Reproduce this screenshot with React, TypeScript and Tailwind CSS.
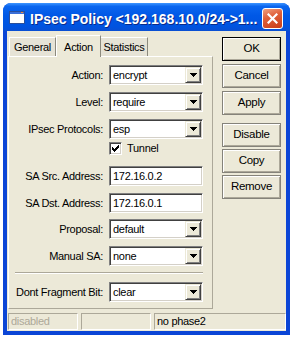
import React from "react";

const Arrow = () => (
  <svg width="7" height="4" viewBox="0 0 7 4" shapeRendering="crispEdges">
    <rect x="0" y="0" width="7" height="1" fill="#000" />
    <rect x="1" y="1" width="5" height="1" fill="#000" />
    <rect x="2" y="2" width="3" height="1" fill="#000" />
    <rect x="3" y="3" width="1" height="1" fill="#000" />
  </svg>
);

const sunken =
  "border border-t-[#808080] border-l-[#808080] border-b-white border-r-white shadow-[inset_1px_1px_0_#404040,inset_-1px_-1px_0_#d4d0c8]";

function Select({ value }: { value: string }) {
  return (
    <div className={"w-[94px] h-[20px] bg-white p-[1px] flex items-center justify-between " + sunken}>
      <span className="pl-[2px] leading-none">{value}</span>
      <div className="w-[16px] h-[16px] bg-[#ECE9D8] border border-t-[#ECE9D8] border-l-[#ECE9D8] border-b-[#404040] border-r-[#404040] shadow-[inset_1px_1px_0_#fff,inset_-1px_-1px_0_#808080] flex items-center justify-center">
        <Arrow />
      </div>
    </div>
  );
}

function TextBox({ value }: { value: string }) {
  return (
    <div className={"w-[94px] h-[20px] bg-white p-[1px] flex items-center " + sunken}>
      <span className="pl-[2px] leading-none">{value}</span>
    </div>
  );
}

function Row({ label, children, cls = "" }: { label: string; children: React.ReactNode; cls?: string }) {
  return (
    <div className={"flex items-center h-[20px] " + cls}>
      <div className="w-[94px] text-right whitespace-nowrap">{label}</div>
      <div className="ml-[6px]">{children}</div>
    </div>
  );
}

function Btn({ label, def = false, cls = "" }: { label: string; def?: boolean; cls?: string }) {
  return (
    <div
      className={
        "w-[59px] h-[24px] flex items-center justify-center bg-[#ECE9D8] border shadow-[inset_1px_1px_0_#fff,inset_-1px_-1px_0_#aca899] text-[11.5px] " +
        (def ? "border-black " : "border-[#85837a] ") +
        cls
      }
    >
      {label}
    </div>
  );
}

export default function App() {
  return (
    <div className="w-[297px] h-[342px] bg-white pt-[3px] pl-[3px] [font-family:'Liberation_Sans',Arial,sans-serif] text-[11px] text-black">
      <div className="w-[287px] h-[332px] flex flex-col rounded-t-[8px] overflow-hidden bg-[#0b45d6]">
        {/* Title bar */}
        <div className="h-[28px] flex items-center pl-[6px] pr-[7px] bg-[linear-gradient(180deg,#3d95ff_0%,#0a66ef_12%,#0058e6_45%,#0053df_85%,#0a4fd2_100%)]">
          <svg width="16" height="13" viewBox="0 0 16 13" shapeRendering="crispEdges" className="mt-[1px]">
            <rect x="0.5" y="0.5" width="15" height="12" fill="#fff" stroke="#2a4f9c" />
            <rect x="1" y="1" width="14" height="2" fill="#3a6fd8" />
            <rect x="12" y="1" width="2" height="1" fill="#f08a3a" />
          </svg>
          <div className="ml-[5px] flex-1 pt-[5px] text-white font-bold text-[14px] whitespace-nowrap [text-shadow:1px_1px_0_#0a2a8a]">
            IPsec Policy &lt;192.168.10.0/24-&gt;1...
          </div>
          <div className="w-[21px] h-[21px] mt-[2px] rounded-[3px] border border-white bg-[linear-gradient(160deg,#f0a080_0%,#e0603a_40%,#c83c18_100%)] flex items-center justify-center">
            <svg width="11" height="11" viewBox="0 0 11 11">
              <path d="M1.5 1.5 L9.5 9.5 M9.5 1.5 L1.5 9.5" stroke="#fff" strokeWidth="2.2" strokeLinecap="square" />
            </svg>
          </div>
        </div>

        {/* Body */}
        <div className="flex-1 mx-[4px] mb-[4px] bg-[#ECE9D8] flex flex-col tracking-[-0.3px]">
          <div className="flex">
            {/* Tabs + panel */}
            <div className="ml-[1px] mt-[4px] w-[205px] flex flex-col">
              <div className="flex items-end h-[21px] pl-[1px]">
                <div className="w-[47px] h-[19px] bg-[#e6e3d6] border border-b-0 border-t-white border-l-white border-r-[#8c8a7e] flex items-center justify-center">
                  General
                </div>
                <div className="relative z-10 -mb-[1px] w-[45px] h-[22px] bg-[#ECE9D8] border border-b-0 border-t-white border-l-white border-r-[#8c8a7e] flex items-start justify-center pt-[3px]">
                  Action
                </div>
                <div className="w-[47px] h-[19px] bg-[#e6e3d6] border border-b-0 border-l-0 border-t-white border-r-[#8c8a7e] flex items-center justify-center">
                  Statistics
                </div>
              </div>
              <div className="h-[253px] border border-t-white border-l-white border-r-[#aca899] border-b-[#aca899] pt-[8px] flex flex-col">
                <Row label="Action:">
                  <Select value="encrypt" />
                </Row>
                <Row label="Level:" cls="mt-[7px]">
                  <Select value="require" />
                </Row>
                <Row label="IPsec Protocols:" cls="mt-[7px]">
                  <Select value="esp" />
                </Row>
                <div className="flex items-center h-[13px] mt-[3px] ml-[100px]">
                  <div className={"w-[13px] h-[13px] bg-white flex items-center justify-center " + sunken}>
                    <svg width="7" height="7" viewBox="0 0 7 7" shapeRendering="crispEdges">
                      <path d="M0 2h1v3h-1z M1 3h1v3h-1z M2 4h1v3h-1z M3 3h1v3h-1z M4 2h1v3h-1z M5 1h1v3h-1z M6 0h1v3h-1z" fill="#000" />
                    </svg>
                  </div>
                  <span className="ml-[5px]">Tunnel</span>
                </div>
                <Row label="SA Src. Address:" cls="mt-[11px]">
                  <TextBox value="172.16.0.2" />
                </Row>
                <Row label="SA Dst. Address:" cls="mt-[7px]">
                  <TextBox value="172.16.0.1" />
                </Row>
                <Row label="Proposal:" cls="mt-[6px]">
                  <Select value="default" />
                </Row>
                <Row label="Manual SA:" cls="mt-[7px]">
                  <Select value="none" />
                </Row>
                <div className="mt-[6px] ml-[6px] w-[188px] h-[2px] border-t border-t-[#aca899] border-b border-b-white" />
                <Row label="Dont Fragment Bit:" cls="mt-[8px]">
                  <Select value="clear" />
                </Row>
              </div>
            </div>

            {/* Buttons */}
            <div className="ml-[9px] mt-[6px] flex flex-col">
              <Btn label="OK" def />
              <Btn label="Cancel" cls="mt-[3px]" />
              <Btn label="Apply" cls="mt-[3px]" />
              <Btn label="Disable" cls="mt-[8px]" />
              <Btn label="Copy" cls="mt-[2px]" />
              <Btn label="Remove" cls="mt-[2px]" />
            </div>
          </div>

          {/* Status bar */}
          <div className="mt-[4px] ml-[1px] flex h-[17px]">
            <div className="w-[70px] border border-t-[#aca899] border-l-[#aca899] border-b-white border-r-white pl-[2px] flex items-center text-[#aca899]">
              disabled
            </div>
            <div className="ml-[3px] w-[70px] border border-t-[#aca899] border-l-[#aca899] border-b-white border-r-white" />
            <div className="ml-[3px] w-[132px] border border-t-[#aca899] border-l-[#aca899] border-b-white border-r-white pl-[2px] flex items-center">
              no phase2
            </div>
          </div>
        </div>
      </div>
    </div>
  );
}
